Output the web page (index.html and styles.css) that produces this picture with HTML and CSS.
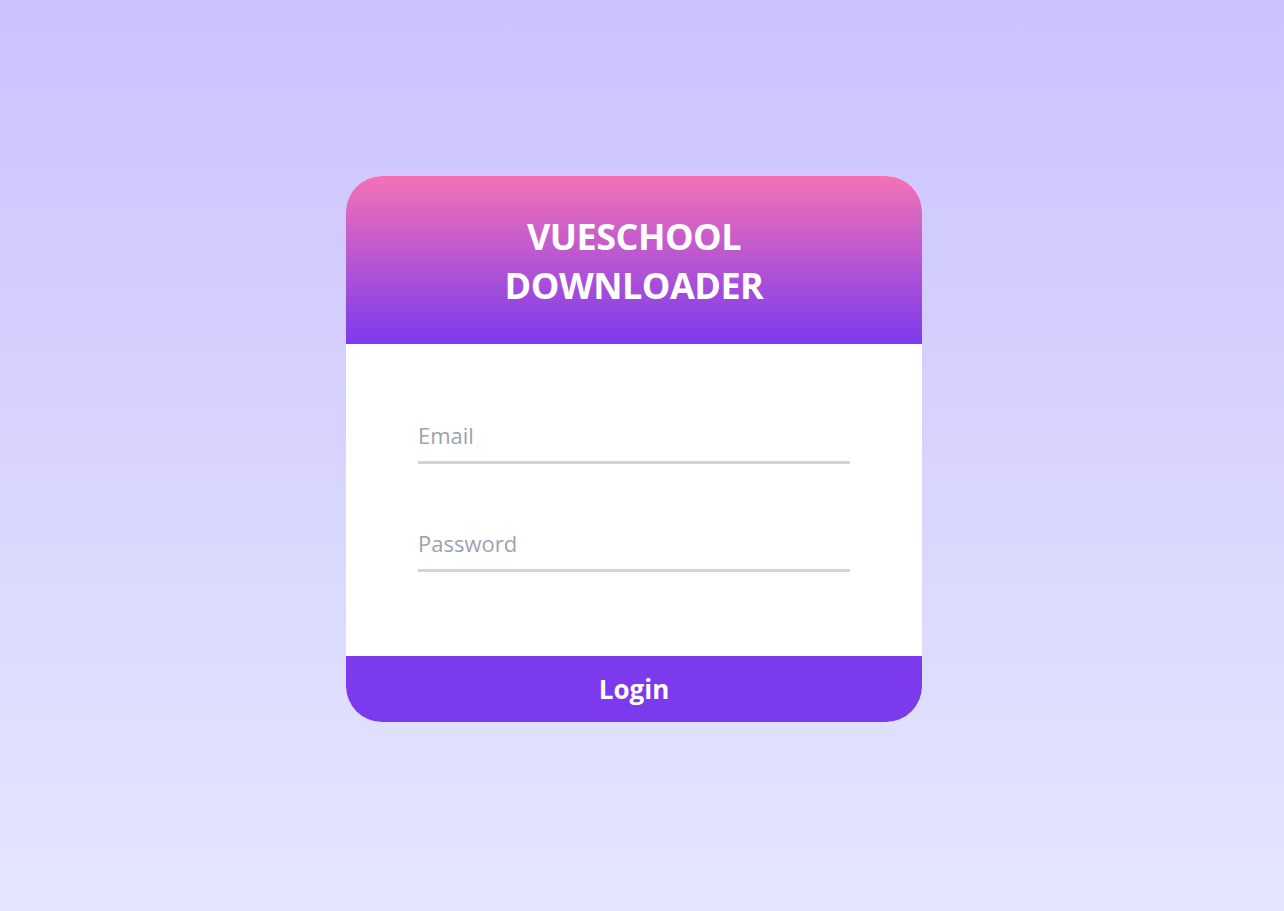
FILE: index.html
```html
<!DOCTYPE html>
<html lang="en">
<head>
<meta charset="utf-8">
<title>Vueschool Downloader</title>
<link rel="stylesheet" href="styles.css">
</head>
<body>
<main class="page">
  <form class="card" onsubmit="return false">
    <header class="card-header">
      <h1 class="title">VUESCHOOL<br>DOWNLOADER</h1>
    </header>
    <div class="card-body">
      <input class="field" type="email" placeholder="Email">
      <input class="field" type="password" placeholder="Password">
    </div>
    <button class="login" type="submit">Login</button>
  </form>
</main>
</body>
</html>
```
FILE: styles.css
```css
* { box-sizing: border-box; }
html, body { margin: 0; padding: 0; height: 100%; }
body {
  font-family: "Open Sans", "Noto Sans", "Liberation Sans", sans-serif;
  background: linear-gradient(to bottom, #cbc2fd 0%, #e4e6fe 100%);
}
.page {
  min-height: 911px;
  display: flex;
  justify-content: center;
  padding-top: 176px;
  padding-right: 16px;
}
.card {
  width: 576px;
  height: 546px;
  border-radius: 36px;
  overflow: hidden;
  background: #ffffff;
  display: flex;
  flex-direction: column;
}
.card-header {
  height: 168px;
  background: linear-gradient(to bottom, #f472b6 0%, #7c3aed 100%);
  display: flex;
  align-items: center;
  justify-content: center;
  padding-top: 2px;
}
.title {
  margin: 0;
  color: #ffffff;
  font-weight: 700;
  font-size: 36px;
  line-height: 49px;
  text-align: center;
  letter-spacing: -0.5px;
}
.card-body {
  flex: 1;
  display: flex;
  flex-direction: column;
  gap: 57px;
  padding: 69px 72px 0;
}
.field {
  width: 100%;
  height: 51px;
  border: none;
  border-bottom: 3px solid #d1d5db;
  outline: none;
  padding: 0 0 4px;
  font-family: inherit;
  font-size: 22px;
  color: #374151;
  background: transparent;
}
.field::placeholder { color: #9ca3af; }
.login {
  height: 66px;
  border: none;
  background: #7c3aed;
  color: #ffffff;
  font-family: inherit;
  font-weight: 700;
  font-size: 26px;
  cursor: pointer;
}
```
